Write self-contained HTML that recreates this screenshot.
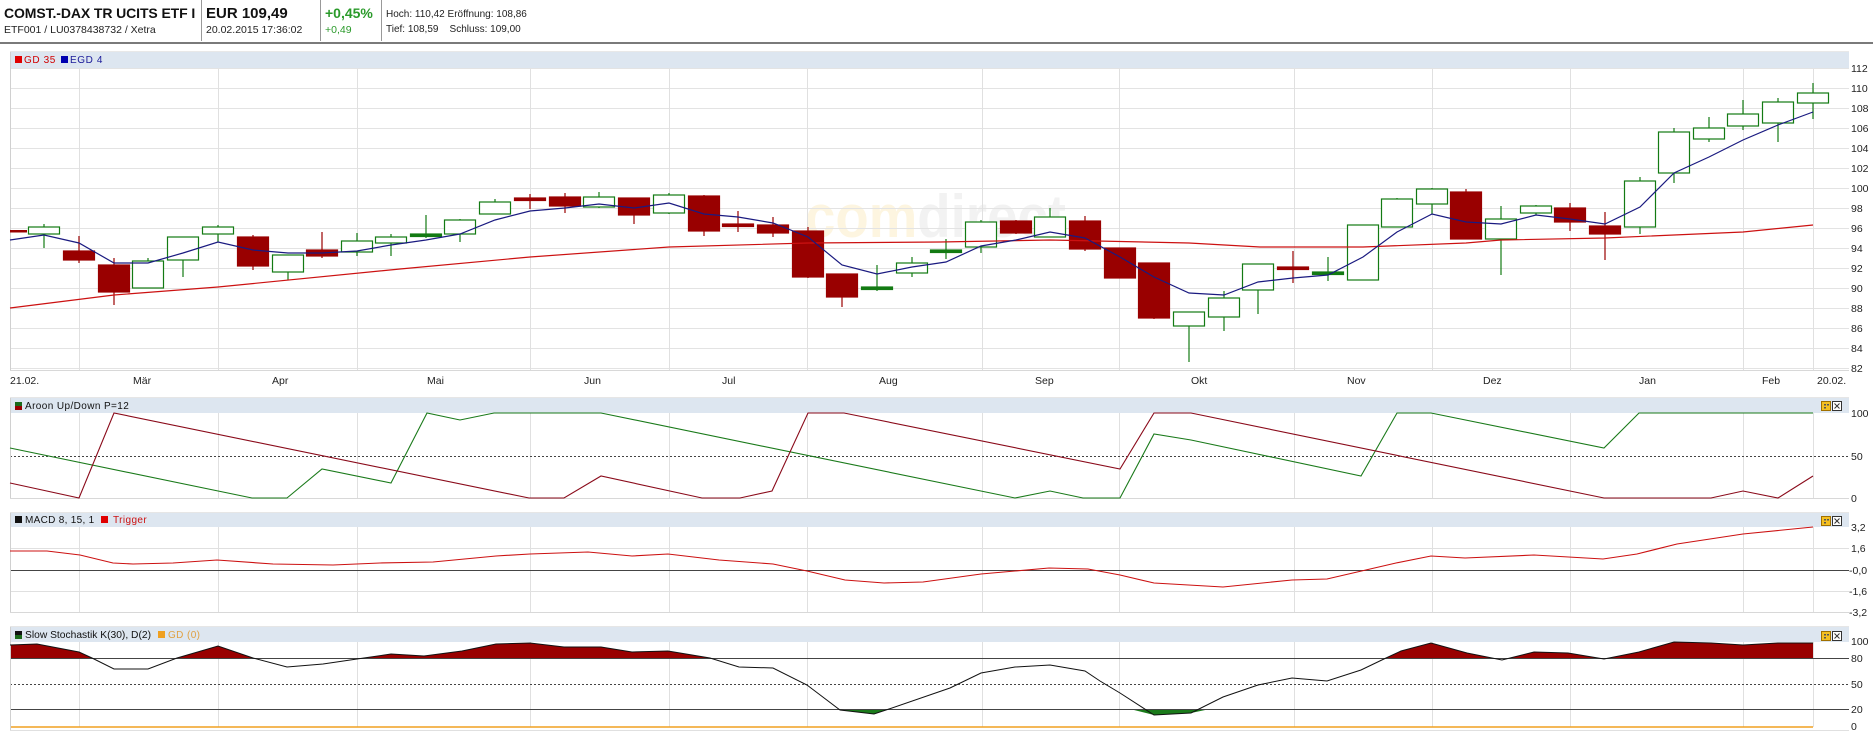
<!DOCTYPE html>
<html><head><meta charset="utf-8"><style>
html,body{margin:0;padding:0;background:#fff;width:1873px;height:734px;overflow:hidden}
svg{display:block}
text{font-family:"Liberation Sans",Arial,sans-serif}
</style></head><body>
<svg width="1873" height="734" viewBox="0 0 1873 734" xmlns="http://www.w3.org/2000/svg">
<!-- header -->
<text x="4" y="18" font-size="14" font-weight="bold" fill="#111" letter-spacing="-0.1">COMST.-DAX TR UCITS ETF I</text>
<text x="4" y="33" font-size="10.5" fill="#222">ETF001 / LU0378438732 / Xetra</text>
<line x1="201.5" y1="0" x2="201.5" y2="41" stroke="#999"/>
<text x="206" y="18" font-size="15" font-weight="bold" fill="#111">EUR 109,49</text>
<text x="206" y="33" font-size="10.5" fill="#222">20.02.2015 17:36:02</text>
<line x1="320.5" y1="0" x2="320.5" y2="41" stroke="#999"/>
<text x="325" y="18" font-size="14" font-weight="bold" fill="#2a9a2a">+0,45%</text>
<text x="325" y="33" font-size="10.5" fill="#2a9a2a">+0,49</text>
<line x1="381.5" y1="0" x2="381.5" y2="41" stroke="#999"/>
<text x="386" y="17" font-size="10" fill="#222">Hoch: 110,42  Eröffnung: 108,86</text>
<text x="386" y="32" font-size="10" fill="#222" xml:space="preserve">Tief: 108,59    Schluss: 109,00</text>
<rect x="0" y="42" width="1873" height="2" fill="#7a7a7a"/>

<!-- MAIN PANEL -->
<line x1="10" y1="51.5" x2="1849" y2="51.5" stroke="#e8e8e8"/>
<rect x="10" y="52" width="1839" height="17" fill="#dde6f0"/>
<rect x="15" y="56" width="7" height="7" fill="#e00000"/>
<text x="24" y="63" font-size="10" fill="#d00000" letter-spacing="0.6">GD 35</text>
<rect x="61" y="56" width="7" height="7" fill="#0000b0"/>
<text x="70" y="63" font-size="10" fill="#1a1a99" letter-spacing="0.6">EGD 4</text>
<!-- watermark -->
<text x="805" y="237" font-size="60" font-weight="bold" fill="#fdf5e0" textLength="261" lengthAdjust="spacingAndGlyphs">com<tspan fill="#f2f2f2">direct</tspan></text>
<g stroke="#e3e3e3" stroke-width="1">
<line x1="10" y1="68.5" x2="1849" y2="68.5"/><line x1="10" y1="88.5" x2="1849" y2="88.5"/><line x1="10" y1="108.5" x2="1849" y2="108.5"/><line x1="10" y1="128.5" x2="1849" y2="128.5"/><line x1="10" y1="148.5" x2="1849" y2="148.5"/><line x1="10" y1="168.5" x2="1849" y2="168.5"/><line x1="10" y1="188.5" x2="1849" y2="188.5"/><line x1="10" y1="208.5" x2="1849" y2="208.5"/><line x1="10" y1="228.5" x2="1849" y2="228.5"/><line x1="10" y1="248.5" x2="1849" y2="248.5"/><line x1="10" y1="268.5" x2="1849" y2="268.5"/><line x1="10" y1="288.5" x2="1849" y2="288.5"/><line x1="10" y1="308.5" x2="1849" y2="308.5"/><line x1="10" y1="328.5" x2="1849" y2="328.5"/><line x1="10" y1="348.5" x2="1849" y2="348.5"/><line x1="10" y1="368.5" x2="1849" y2="368.5"/>
</g>
<g stroke="#e0e0e0" stroke-width="1">
<line x1="79.5" y1="69" x2="79.5" y2="370"/><line x1="218.5" y1="69" x2="218.5" y2="370"/><line x1="357.5" y1="69" x2="357.5" y2="370"/><line x1="530.5" y1="69" x2="530.5" y2="370"/><line x1="669.5" y1="69" x2="669.5" y2="370"/><line x1="807.5" y1="69" x2="807.5" y2="370"/><line x1="982.5" y1="69" x2="982.5" y2="370"/><line x1="1119.5" y1="69" x2="1119.5" y2="370"/><line x1="1294.5" y1="69" x2="1294.5" y2="370"/><line x1="1432.5" y1="69" x2="1432.5" y2="370"/><line x1="1570.5" y1="69" x2="1570.5" y2="370"/><line x1="1743.5" y1="69" x2="1743.5" y2="370"/><line x1="1813.5" y1="69" x2="1813.5" y2="370"/>
</g>
<line x1="10.5" y1="52" x2="10.5" y2="370" stroke="#d0d0d0"/>
<line x1="10" y1="370.5" x2="1849" y2="370.5" stroke="#d8d8d8"/>

<!-- candles -->
<g stroke-width="1.2">
<g stroke="#990000" fill="#990000">
<rect x="10" y="230" width="17" height="2.5" stroke="none"/>
<line x1="79" y1="236" x2="79" y2="263"/><rect x="63.5" y="251" width="31" height="9"/>
<line x1="114" y1="258" x2="114" y2="305"/><rect x="98.5" y="265" width="31" height="27"/>
<line x1="253" y1="235" x2="253" y2="270"/><rect x="237.5" y="237" width="31" height="29"/>
<line x1="322" y1="232" x2="322" y2="258"/><rect x="306.5" y="250" width="31" height="6"/>
<line x1="530" y1="194" x2="530" y2="209"/><rect x="514.5" y="198" width="31" height="2.5"/>
<line x1="565" y1="193" x2="565" y2="213"/><rect x="549.5" y="197" width="31" height="9"/>
<line x1="634" y1="198" x2="634" y2="224"/><rect x="618.5" y="198" width="31" height="17"/>
<line x1="704" y1="195" x2="704" y2="236"/><rect x="688.5" y="196" width="31" height="35"/>
<line x1="738" y1="211" x2="738" y2="232"/><rect x="722.5" y="224" width="31" height="2.5"/>
<line x1="773" y1="217" x2="773" y2="237"/><rect x="757.5" y="225" width="31" height="8"/>
<line x1="808" y1="227" x2="808" y2="278"/><rect x="792.5" y="231" width="31" height="46"/>
<line x1="842" y1="274" x2="842" y2="307"/><rect x="826.5" y="274" width="31" height="23"/>
<line x1="1016" y1="220" x2="1016" y2="234"/><rect x="1000.5" y="221" width="31" height="12"/>
<line x1="1085" y1="216" x2="1085" y2="251"/><rect x="1069.5" y="221" width="31" height="28"/>
<line x1="1120" y1="248" x2="1120" y2="278"/><rect x="1104.5" y="248" width="31" height="30"/>
<line x1="1154" y1="263" x2="1154" y2="319"/><rect x="1138.5" y="263" width="31" height="55"/>
<line x1="1293" y1="251" x2="1293" y2="283"/><rect x="1277.5" y="267" width="31" height="2.5"/>
<line x1="1466" y1="189" x2="1466" y2="239"/><rect x="1450.5" y="192" width="31" height="47"/>
<line x1="1570" y1="203" x2="1570" y2="231"/><rect x="1554.5" y="208" width="31" height="14"/>
<line x1="1605" y1="212" x2="1605" y2="260"/><rect x="1589.5" y="226" width="31" height="8"/>
</g>
<g stroke="#137a13" fill="#fff">
<line x1="44" y1="224" x2="44" y2="248"/><rect x="28.5" y="227" width="31" height="7"/>
<line x1="148" y1="258" x2="148" y2="288"/><rect x="132.5" y="261" width="31" height="27"/>
<line x1="183" y1="237" x2="183" y2="277"/><rect x="167.5" y="237" width="31" height="23"/>
<line x1="218" y1="225" x2="218" y2="242"/><rect x="202.5" y="227" width="31" height="7"/>
<line x1="288" y1="255" x2="288" y2="280"/><rect x="272.5" y="255" width="31" height="17"/>
<line x1="357" y1="233" x2="357" y2="256"/><rect x="341.5" y="241" width="31" height="11"/>
<line x1="391" y1="234" x2="391" y2="256"/><rect x="375.5" y="237" width="31" height="6"/>
<line x1="426" y1="215" x2="426" y2="238"/><rect x="410.5" y="234" width="31" height="2.5" fill="#137a13"/>
<line x1="460" y1="219" x2="460" y2="242"/><rect x="444.5" y="220" width="31" height="14"/>
<line x1="495" y1="199" x2="495" y2="214"/><rect x="479.5" y="202" width="31" height="12"/>
<line x1="599" y1="192" x2="599" y2="208"/><rect x="583.5" y="197" width="31" height="10"/>
<line x1="669" y1="193" x2="669" y2="214"/><rect x="653.5" y="195" width="31" height="18"/>
<line x1="877" y1="265" x2="877" y2="291"/><rect x="861.5" y="287" width="31" height="2.5" fill="#137a13"/>
<line x1="912" y1="257" x2="912" y2="277"/><rect x="896.5" y="263" width="31" height="10"/>
<line x1="946" y1="239" x2="946" y2="259"/><rect x="930.5" y="250" width="31" height="2.5" fill="#137a13"/>
<line x1="981" y1="220" x2="981" y2="253"/><rect x="965.5" y="222" width="31" height="25"/>
<line x1="1050" y1="208" x2="1050" y2="237"/><rect x="1034.5" y="217" width="31" height="20"/>
<line x1="1189" y1="312" x2="1189" y2="362"/><rect x="1173.5" y="312" width="31" height="14"/>
<line x1="1224" y1="291" x2="1224" y2="331"/><rect x="1208.5" y="298" width="31" height="19"/>
<line x1="1258" y1="264" x2="1258" y2="314"/><rect x="1242.5" y="264" width="31" height="26"/>
<line x1="1328" y1="257" x2="1328" y2="281"/><rect x="1312.5" y="272" width="31" height="2.5" fill="#137a13"/>
<line x1="1363" y1="225" x2="1363" y2="280"/><rect x="1347.5" y="225" width="31" height="55"/>
<line x1="1397" y1="198" x2="1397" y2="227"/><rect x="1381.5" y="199" width="31" height="28"/>
<line x1="1432" y1="188" x2="1432" y2="214"/><rect x="1416.5" y="189" width="31" height="15"/>
<line x1="1501" y1="206" x2="1501" y2="275"/><rect x="1485.5" y="219" width="31" height="20"/>
<line x1="1536" y1="205" x2="1536" y2="215"/><rect x="1520.5" y="206" width="31" height="7"/>
<line x1="1640" y1="177" x2="1640" y2="234"/><rect x="1624.5" y="181" width="31" height="46"/>
<line x1="1674" y1="128" x2="1674" y2="183"/><rect x="1658.5" y="132" width="31" height="41"/>
<line x1="1709" y1="117" x2="1709" y2="142"/><rect x="1693.5" y="128" width="31" height="11"/>
<line x1="1743" y1="100" x2="1743" y2="130"/><rect x="1727.5" y="114" width="31" height="12"/>
<line x1="1778" y1="98" x2="1778" y2="142"/><rect x="1762.5" y="102" width="31" height="21"/>
<line x1="1813" y1="83" x2="1813" y2="119"/><rect x="1797.5" y="93" width="31" height="10"/>
</g>
</g>
<!-- GD35 -->
<polyline fill="none" stroke="#cc1111" stroke-width="1.2" points="10,308 114,295 218,287 400,269 530,257 669,247 808,243 940,242 1050,240 1189,243 1260,247 1363,247 1466,243 1501,240 1605,238 1743,232 1813,225"/>
<!-- EGD4 -->
<polyline fill="none" stroke="#1a1a80" stroke-width="1.2" points="10,240 44,235 79,243 114,263 148,263 183,253 218,242 253,250 288,253 322,253 357,251 391,245 426,240 460,234 495,220 530,211 565,208 599,204 634,208 669,203 704,214 738,217 773,223 808,237 842,265 877,274 912,267 946,262 981,246 1016,240 1050,232 1085,238 1120,257 1154,277 1189,293 1224,295 1258,282 1293,278 1328,275 1363,257 1397,232 1432,214 1466,222 1501,224 1536,215 1570,219 1605,224 1640,207 1674,173 1709,157 1743,140 1778,125 1813,112"/>
<!-- price axis -->
<g font-size="10.5" fill="#222">
<text x="1851" y="72">112</text><text x="1851" y="92">110</text><text x="1851" y="112">108</text><text x="1851" y="132">106</text><text x="1851" y="152">104</text><text x="1851" y="172">102</text><text x="1851" y="192">100</text><text x="1851" y="212">98</text><text x="1851" y="232">96</text><text x="1851" y="252">94</text><text x="1851" y="272">92</text><text x="1851" y="292">90</text><text x="1851" y="312">88</text><text x="1851" y="332">86</text><text x="1851" y="352">84</text><text x="1851" y="372">82</text>
</g>
<g font-size="10.5" fill="#222">
<text x="10" y="384">21.02.</text><text x="133" y="384">Mär</text><text x="272" y="384">Apr</text><text x="427" y="384">Mai</text><text x="584" y="384">Jun</text><text x="722" y="384">Jul</text><text x="879" y="384">Aug</text><text x="1035" y="384">Sep</text><text x="1191" y="384">Okt</text><text x="1347" y="384">Nov</text><text x="1483" y="384">Dez</text><text x="1639" y="384">Jan</text><text x="1762" y="384">Feb</text><text x="1817" y="384">20.02.</text>
</g>

<!-- AROON -->
<line x1="10" y1="397.5" x2="1849" y2="397.5" stroke="#e6e6e6"/>
<rect x="10" y="398" width="1839" height="15" fill="#dde6f0"/>
<rect x="15" y="402" width="7" height="4" fill="#1a6a1a"/><rect x="15" y="406" width="7" height="4" fill="#990000"/>
<text x="25" y="409" font-size="10" fill="#111" letter-spacing="0.4">Aroon Up/Down P=12</text>
<g stroke="#e0e0e0"><line x1="79.5" y1="413" x2="79.5" y2="498"/><line x1="218.5" y1="413" x2="218.5" y2="498"/><line x1="357.5" y1="413" x2="357.5" y2="498"/><line x1="530.5" y1="413" x2="530.5" y2="498"/><line x1="669.5" y1="413" x2="669.5" y2="498"/><line x1="807.5" y1="413" x2="807.5" y2="498"/><line x1="982.5" y1="413" x2="982.5" y2="498"/><line x1="1119.5" y1="413" x2="1119.5" y2="498"/><line x1="1294.5" y1="413" x2="1294.5" y2="498"/><line x1="1432.5" y1="413" x2="1432.5" y2="498"/><line x1="1570.5" y1="413" x2="1570.5" y2="498"/><line x1="1743.5" y1="413" x2="1743.5" y2="498"/><line x1="1813.5" y1="413" x2="1813.5" y2="498"/></g>
<line x1="10" y1="498.5" x2="1849" y2="498.5" stroke="#d8d8d8"/>
<line x1="10" y1="456.5" x2="1849" y2="456.5" stroke="#444" stroke-dasharray="2,2"/>
<line x1="10.5" y1="398" x2="10.5" y2="498" stroke="#d0d0d0"/>
<polyline fill="none" stroke="#1a7a1a" stroke-width="1.1" points="10,448 252,498 287,498 322,469 391,483 427,413 460,420 494,413 601,413 1015,498 1050,491 1083,498 1120,498 1154,434 1191,440 1361,476 1397,413 1431,413 1604,448 1639,413 1813,413"/>
<polyline fill="none" stroke="#8a0a1a" stroke-width="1.1" points="10,483 79,498 114,413 529,498 564,498 601,476 702,498 740,498 772,491 808,413 844,413 1120,469 1154,413 1191,413 1604,498 1711,498 1743,491 1778,498 1813,476"/>
<rect x="1821.5" y="401.5" width="9" height="9" fill="#f5c020" stroke="#a07000"/><rect x="1824" y="404" width="2" height="1.5" fill="#555"/><rect x="1827" y="404" width="2" height="1.5" fill="#555"/><rect x="1824" y="407" width="2" height="1.5" fill="#555"/>
<rect x="1832.5" y="401.5" width="9" height="9" fill="#fff" stroke="#333"/><path d="M1834.5 403.5 L1839.5 408.5 M1839.5 403.5 L1834.5 408.5" stroke="#333"/>
<g font-size="10.5" fill="#222"><text x="1851" y="417">100</text><text x="1851" y="460">50</text><text x="1851" y="502">0</text></g>

<!-- MACD -->
<line x1="10" y1="512.5" x2="1849" y2="512.5" stroke="#e6e6e6"/>
<rect x="10" y="513" width="1839" height="14" fill="#dde6f0"/>
<rect x="15" y="516" width="7" height="7" fill="#111"/>
<text x="25" y="523" font-size="10" fill="#111" letter-spacing="0.3">MACD 8, 15, 1</text>
<rect x="101" y="516" width="7" height="7" fill="#e00000"/>
<text x="113" y="523" font-size="10" fill="#cc1111" letter-spacing="0.4">Trigger</text>
<g stroke="#e0e0e0"><line x1="79.5" y1="527" x2="79.5" y2="612"/><line x1="218.5" y1="527" x2="218.5" y2="612"/><line x1="357.5" y1="527" x2="357.5" y2="612"/><line x1="530.5" y1="527" x2="530.5" y2="612"/><line x1="669.5" y1="527" x2="669.5" y2="612"/><line x1="807.5" y1="527" x2="807.5" y2="612"/><line x1="982.5" y1="527" x2="982.5" y2="612"/><line x1="1119.5" y1="527" x2="1119.5" y2="612"/><line x1="1294.5" y1="527" x2="1294.5" y2="612"/><line x1="1432.5" y1="527" x2="1432.5" y2="612"/><line x1="1570.5" y1="527" x2="1570.5" y2="612"/><line x1="1743.5" y1="527" x2="1743.5" y2="612"/><line x1="1813.5" y1="527" x2="1813.5" y2="612"/>
<line x1="10" y1="548.5" x2="1849" y2="548.5"/><line x1="10" y1="591.5" x2="1849" y2="591.5"/></g>
<line x1="10" y1="612.5" x2="1849" y2="612.5" stroke="#d8d8d8"/>
<line x1="10" y1="570.5" x2="1849" y2="570.5" stroke="#444"/>
<line x1="10.5" y1="513" x2="10.5" y2="612" stroke="#d0d0d0"/>
<polyline fill="none" stroke="#cc1111" stroke-width="1.1" points="10,551 47,551 80,555 113,563 133,564 173,563 217,560 273,564 333,565 380,563 433,562 496,556 530,554 588,552 632,556 668,554 719,560 773,564 807,571 845,580 884,583 923,582 981,574 1015,571 1049,568 1088,569 1120,575 1154,583 1223,587 1292,580 1327,579 1396,563 1431,556 1465,558 1534,555 1603,559 1637,554 1677,544 1743,534 1813,527"/>
<rect x="1821.5" y="516.5" width="9" height="9" fill="#f5c020" stroke="#a07000"/><rect x="1824" y="519" width="2" height="1.5" fill="#555"/><rect x="1827" y="519" width="2" height="1.5" fill="#555"/><rect x="1824" y="522" width="2" height="1.5" fill="#555"/>
<rect x="1832.5" y="516.5" width="9" height="9" fill="#fff" stroke="#333"/><path d="M1834.5 518.5 L1839.5 523.5 M1839.5 518.5 L1834.5 523.5" stroke="#333"/>
<g font-size="10.5" fill="#222"><text x="1851" y="531">3,2</text><text x="1851" y="552">1,6</text><text x="1849" y="574">-0,0</text><text x="1849" y="595">-1,6</text><text x="1849" y="616">-3,2</text></g>

<!-- STOCH -->
<line x1="10" y1="626.5" x2="1849" y2="626.5" stroke="#e6e6e6"/>
<rect x="10" y="627" width="1839" height="15" fill="#dde6f0"/>
<rect x="15" y="631" width="7" height="4" fill="#111"/><rect x="15" y="635" width="7" height="4" fill="#1a6a1a"/>
<text x="25" y="638" font-size="10" fill="#111" textLength="126" lengthAdjust="spacingAndGlyphs">Slow Stochastik K(30), D(2)</text>
<rect x="158" y="631" width="7" height="7" fill="#f0a020"/>
<text x="168" y="638" font-size="10" fill="#e0a040" letter-spacing="0.4">GD (0)</text>
<g stroke="#e0e0e0"><line x1="79.5" y1="642" x2="79.5" y2="727"/><line x1="218.5" y1="642" x2="218.5" y2="727"/><line x1="357.5" y1="642" x2="357.5" y2="727"/><line x1="530.5" y1="642" x2="530.5" y2="727"/><line x1="669.5" y1="642" x2="669.5" y2="727"/><line x1="807.5" y1="642" x2="807.5" y2="727"/><line x1="982.5" y1="642" x2="982.5" y2="727"/><line x1="1119.5" y1="642" x2="1119.5" y2="727"/><line x1="1294.5" y1="642" x2="1294.5" y2="727"/><line x1="1432.5" y1="642" x2="1432.5" y2="727"/><line x1="1570.5" y1="642" x2="1570.5" y2="727"/><line x1="1743.5" y1="642" x2="1743.5" y2="727"/><line x1="1813.5" y1="642" x2="1813.5" y2="727"/></g>
<defs>
<clipPath id="above"><rect x="0" y="600" width="1873" height="58"/></clipPath>
<clipPath id="below"><rect x="0" y="709" width="1873" height="30"/></clipPath>
</defs>
<polygon clip-path="url(#above)" fill="#990000" points="10,658 10,645 37,644 79,652 92,658 114,669 148,669 177,658 218,646 253,658 287,667 323,664 357,659 391,654 424,656 462,651 496,644 530,643 564,647 601,647 632,652 668,651 710,658 739,667 773,668 807,685 840,710 874,714 889,709 950,688 981,673 1015,667 1050,665 1085,671 1100,681 1120,693 1154,715 1191,713 1223,697 1258,685 1292,678 1327,681 1361,670 1386,658 1401,651 1431,643 1467,653 1502,660 1534,652 1568,653 1604,659 1639,652 1674,642 1711,643 1743,645 1778,643 1813,643 1813,658"/>
<polygon clip-path="url(#below)" fill="#1a7a1a" points="820,709 840,710 874,714 889,709"/>
<polygon clip-path="url(#below)" fill="#1a7a1a" points="1130,709 1154,715 1191,713 1210,709"/>
<line x1="10" y1="658.5" x2="1849" y2="658.5" stroke="#444"/>
<line x1="10" y1="684.5" x2="1849" y2="684.5" stroke="#444" stroke-dasharray="2,2"/>
<line x1="10" y1="709.5" x2="1849" y2="709.5" stroke="#444"/>
<line x1="10" y1="727" x2="1813" y2="727" stroke="#f0a020" stroke-width="1.5"/>
<line x1="10" y1="730.5" x2="1849" y2="730.5" stroke="#e0e0e0"/>
<line x1="10.5" y1="627" x2="10.5" y2="730" stroke="#d0d0d0"/>
<polyline fill="none" stroke="#111" stroke-width="1" points="10,645 37,644 79,652 92,658 114,669 148,669 177,658 218,646 253,658 287,667 323,664 357,659 391,654 424,656 462,651 496,644 530,643 564,647 601,647 632,652 668,651 710,658 739,667 773,668 807,685 840,710 874,714 889,709 950,688 981,673 1015,667 1050,665 1085,671 1100,681 1120,693 1154,715 1191,713 1223,697 1258,685 1292,678 1327,681 1361,670 1386,658 1401,651 1431,643 1467,653 1502,660 1534,652 1568,653 1604,659 1639,652 1674,642 1711,643 1743,645 1778,643 1813,643"/>
<rect x="1821.5" y="631.5" width="9" height="9" fill="#f5c020" stroke="#a07000"/><rect x="1824" y="634" width="2" height="1.5" fill="#555"/><rect x="1827" y="634" width="2" height="1.5" fill="#555"/><rect x="1824" y="637" width="2" height="1.5" fill="#555"/>
<rect x="1832.5" y="631.5" width="9" height="9" fill="#fff" stroke="#333"/><path d="M1834.5 633.5 L1839.5 638.5 M1839.5 633.5 L1834.5 638.5" stroke="#333"/>
<g font-size="10.5" fill="#222"><text x="1851" y="645">100</text><text x="1851" y="662">80</text><text x="1851" y="688">50</text><text x="1851" y="713">20</text><text x="1851" y="730">0</text></g>
</svg>
</body></html>
